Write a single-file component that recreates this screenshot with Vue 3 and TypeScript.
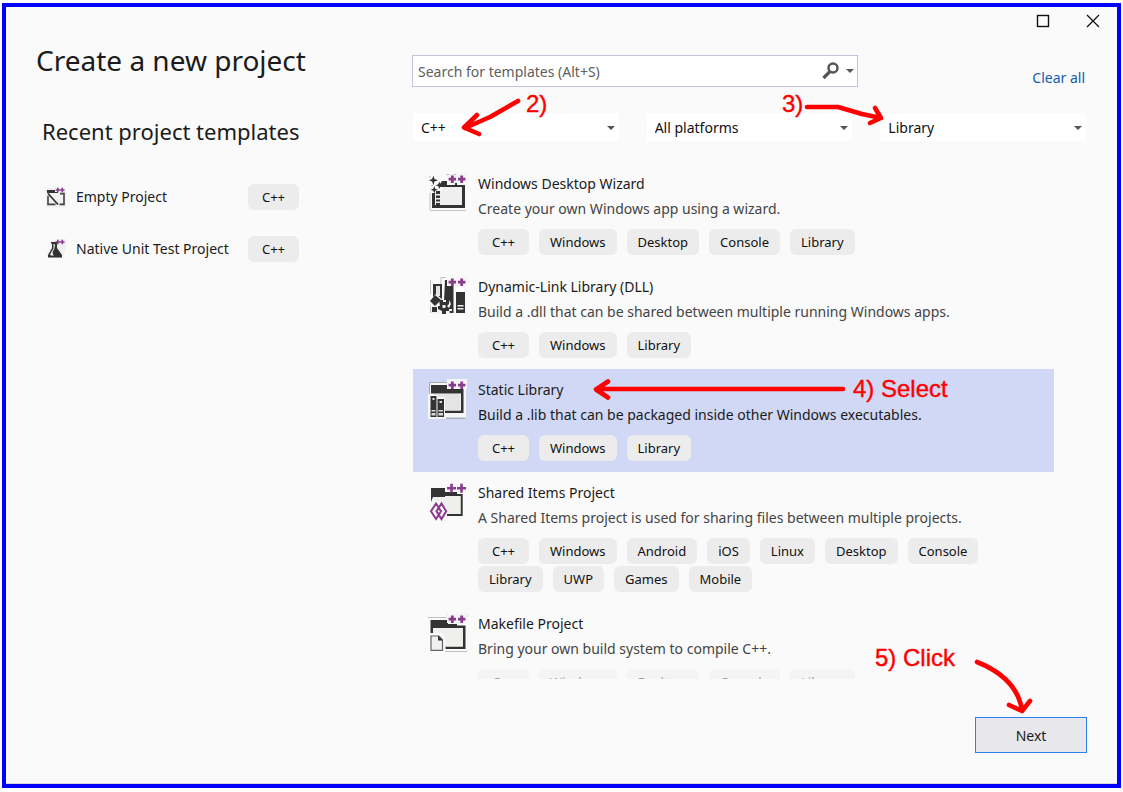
<script setup lang="ts">
import { ref } from 'vue'

type IconName = 'wizard' | 'dll' | 'static' | 'shared' | 'makefile'

interface Template {
  name: string
  description: string
  icon: IconName
  tags: string[]
}

const templates: Template[] = [
  {
    name: 'Windows Desktop Wizard',
    description: 'Create your own Windows app using a wizard.',
    icon: 'wizard',
    tags: ['C++', 'Windows', 'Desktop', 'Console', 'Library'],
  },
  {
    name: 'Dynamic-Link Library (DLL)',
    description: 'Build a .dll that can be shared between multiple running Windows apps.',
    icon: 'dll',
    tags: ['C++', 'Windows', 'Library'],
  },
  {
    name: 'Static Library',
    description: 'Build a .lib that can be packaged inside other Windows executables.',
    icon: 'static',
    tags: ['C++', 'Windows', 'Library'],
  },
  {
    name: 'Shared Items Project',
    description: 'A Shared Items project is used for sharing files between multiple projects.',
    icon: 'shared',
    tags: ['C++', 'Windows', 'Android', 'iOS', 'Linux', 'Desktop', 'Console', 'Library', 'UWP', 'Games', 'Mobile'],
  },
  {
    name: 'Makefile Project',
    description: 'Bring your own build system to compile C++.',
    icon: 'makefile',
    tags: ['C++', 'Windows', 'Desktop', 'Console', 'Library'],
  },
]

const recent = [
  { name: 'Empty Project', icon: 'empty', tag: 'C++' },
  { name: 'Native Unit Test Project', icon: 'flask', tag: 'C++' },
]

const filters = [
  { label: 'Language', options: ['C++', 'C#', 'Python'], value: 'C++' },
  { label: 'Platform', options: ['All platforms', 'Windows', 'Linux'], value: 'All platforms' },
  { label: 'Project type', options: ['Library', 'Console', 'Desktop'], value: 'Library' },
]

const filterValues = ref(filters.map((f) => f.value))
const query = ref('')
const selected = ref('Static Library')

function clearAll() {
  query.value = ''
}
</script>

<template>
  <div class="page">
    <main class="window">
      <div class="caption">
        <button type="button" aria-label="Maximize">
          <svg width="14" height="14" viewBox="0 0 14 14"><rect x="1.5" y="1.5" width="11" height="11" fill="none" stroke="#111" stroke-width="1.4" /></svg>
        </button>
        <button type="button" aria-label="Close">
          <svg width="14" height="14" viewBox="0 0 14 14"><path d="M1 1 13 13M13 1 1 13" fill="none" stroke="#111" stroke-width="1.3" /></svg>
        </button>
      </div>

      <div class="columns">
        <aside class="side">
          <h1>Create a new project</h1>
          <h2>Recent project templates</h2>
          <ul class="recent">
            <li v-for="r in recent" :key="r.name">
              <svg v-if="r.icon === 'empty'" width="20" height="20" viewBox="0 0 20 20">
                <path d="M0 1H9V0H20V20H0Z" fill="#f0f0f0" />
                <path d="M1 6V3H9V5H12V6Z" fill="#333" />
                <path d="M14 6.6H18V17.4H13.5M9.5 17.4H2V9" fill="none" stroke="#444" stroke-width="1.6" />
                <path d="M2 6.5 12 17.5" stroke="#333" stroke-width="1.8" />
                <path d="M11.8 .8v4.4M9.6 3H14M16.3 .8v4.4M14.1 3h4.4" stroke="#8a3a8f" stroke-width="1.6" />
              </svg>
              <svg v-else width="20" height="20" viewBox="0 0 20 20">
                <path d="M4 2H9V0H20V8L17 19H1V15L5 9Z" fill="#f0f0f0" />
                <path d="M5 3H12V4.500H11V9L16 16V18.500H2V16L6 9V4.500H5Z" fill="#333" />
                <path d="M7.500 5V9.500L4.500 14.500Q3.500 16.500 5.500 16.500H8Q6 15 7 12Q9 10 8.800 5Z" fill="#f3f3f3" />
                <path d="M11.800 .8v4.400M9.600 3H14M16.300 .8v4.400M14.100 3h4.400" stroke="#8a3a8f" stroke-width="1.600" />
              </svg>
              <a href="#">{{ r.name }}</a>
              <span class="tag">{{ r.tag }}</span>
            </li>
          </ul>
        </aside>

        <section class="content">
          <div class="search-row">
            <div class="search">
              <input v-model="query" type="search" aria-label="Search for templates" placeholder="Search for templates (Alt+S)" />
              <button type="button" aria-label="Search">
                <svg width="20" height="20" viewBox="0 0 20 20">
                  <circle cx="12" cy="7" r="4.500" fill="none" stroke="#555" stroke-width="2.500" />
                  <path d="M9 10.500 2.500 17" stroke="#555" stroke-width="3.200" />
                </svg>
              </button>
              <button type="button" aria-label="Search options">
                <svg width="8" height="4" viewBox="0 0 8 4"><path d="M0 0H8L4 4Z" fill="#555" /></svg>
              </button>
            </div>
            <button class="clear" type="button" @click="clearAll">Clear all</button>
          </div>

          <div class="filters">
            <div v-for="(f, i) in filters" :key="f.label" class="filter">
              <select v-model="filterValues[i]" :aria-label="f.label">
                <option v-for="o in f.options" :key="o">{{ o }}</option>
              </select>
              <svg class="caret" width="8" height="4" viewBox="0 0 8 4"><path d="M0 0H8L4 4Z" fill="#555" /></svg>
            </div>
          </div>

          <ul class="list">
            <li
              v-for="t in templates"
              :key="t.name"
              :class="{ selected: selected === t.name, faded: t.icon === 'makefile' }"
              @click="selected = t.name"
            >
              <svg class="icon" width="40" height="40" viewBox="0 0 40 40">
                <template v-if="t.icon === 'wizard'">
                  <path d="M2 37V20M2 37.500H38" fill="none" stroke="#c4c4c4" stroke-width="1" />
                  <path d="M20 1H38V10H20Z" fill="#f0f0f0" />
                  <path d="M18.500 1.500H21M26 1.500H29M35 1.500H38V4M2 3V5M3 12.500H5" fill="none" stroke="#bbb" stroke-width="1" />
                  <path d="M4 20V35H37V12H29V10H27V12H19V8H14L12 11V14H34V32H7V20Z" fill="#333" />
                  <path d="M7 18H14V14H34V32H7Z" fill="#efefef" />
                  <path d="M8 18h4v3h-4zM8 22.500h4v2.500h-4zM8 26.500h4v2h-4zM8 30h4v2h-4z" fill="#333" />
                  <path d="M5.300 2.500 6.500 6 10 7.300 6.500 8.500 5.300 12.300 4.200 8.500 .8 7.300 4.200 6ZM11.300 8.500l1 2.800 2.700 1-2.700 1-1 2.700-1-2.700-2.600-1 2.600-1ZM6.300 13l.9 2.800 2.600.9-2.600 1-.9 2.700-1-2.700-2.600-1 2.600-.9Z" fill="#333" />
                </template>
                <template v-else-if="t.icon === 'dll'">
                  <path d="M2.500 4V18M2.500 26V37M13 8V1.500H18" fill="none" stroke="#c0c0c0" stroke-width="1" />
                  <path d="M5 8H14V24H5Z" fill="#333" />
                  <path d="M8 10H12V20H8Z" fill="#e4e4e0" />
                  <path d="M17 4H25.500V37H16V25Z" fill="#333" />
                  <path d="M28 11H37V17H28Z" fill="#fff" />
                  <path d="M28 16H37V37H28Z" fill="#333" />
                  <path d="M29.500 29H35.500V30.500H29.500ZM29.500 32H35.500V33.500H29.500ZM20 33H24V35H20Z" fill="#eee" />
                  <path d="M1 25 8 18 15 24 21 24 23 28 21 32 22 38H3V31Z" fill="#f4f4f4" />
                  <path d="M2 25 7 19 13 24 7 30Z" fill="#333" />
                  <path d="M4 31H9V36H4Z" fill="#333" />
                  <path d="M11 24H15V26H18V24H21V28L19 30 21 32V35H18V38H14V35L10 33V30H12Z" fill="#333" />
                  <path d="M14.500 29H17.500V32H14.500Z" fill="#eee" />
                </template>
                <template v-else-if="t.icon === 'static'">
                  <path d="M1 3H19V0H39V9H38V38H18V40H0V15H1Z" fill="#f6f6f6" />
                  <path d="M1.500 15V3.500H20M18 39.500H37" fill="none" stroke="#aaa" stroke-width="1" />
                  <path d="M3 6H20V10H35.500V34H17V31.500H33V14.500H3Z" fill="#333" />
                  <path d="M6 15H32.500V31.500H17V18H10V16H6Z" fill="#e4e4e4" />
                  <path d="M2.500 17H8.500V38H2.500ZM9.500 20H16V38H9.500Z" fill="#333" />
                  <path d="M4.500 19H6.500V21H4.500ZM11.500 22H14V24H11.500ZM3.500 31H7.500V32.500H3.500ZM3.500 34H7.500V36.500H3.500ZM10.500 31H15V32.500H10.500ZM10.500 34H15V36.500H10.500Z" fill="#ddd" />
                </template>
                <template v-else-if="t.icon === 'shared'">
                  <path d="M3 20V6H17V10H29V12H34.700V34H19V32H32.500V14H17V15H5L3 20Z" fill="#333" />
                  <path d="M5 15H17V14H32.500V32H19L13 19H5Z" fill="#efefee" />
                  <path d="M2.500 29 7.500 20H14L19 29 14 38H7.500Z" fill="#fafafa" />
                  <path d="M3 29.300 8 21.500 13 29.300 8 37ZM8.500 29.300 13.500 21.500 18.200 29.300 13.500 37Z" fill="none" stroke="#8a3a8f" stroke-width="2" />
                </template>
                <template v-else>
                  <path d="M0 4.500H19M17 38.500H39.500M19.500 4V1.500M36 1.500H39V4" fill="none" stroke="#c0c0c0" stroke-width="1" />
                  <path d="M2.500 20V7H20V11H29V12.500H37.500V36H17.500V33.500H35V15H5V20Z" fill="#333" />
                  <path d="M5 15H35V33.500H17.500V25L14 20H5Z" fill="#efefee" />
                  <path d="M3 23H11L14.500 27V37.300H3Z" fill="#f0f0f0" stroke="#666" stroke-width="1.200" />
                  <path d="M10 22.500 15 27.500H10Z" fill="#333" />
                </template>
                <path v-if="t.icon !== 'shared'" d="M19 2H28V0H39V10H19Z" fill="#f6f6f6" />
                <path
                  v-if="t.icon === 'shared'"
                  d="M23.500 1.800v9M19 6.300h9M33.500 1.800v9M29 6.300h9"
                  stroke="#8a3a8f"
                  stroke-width="2.600"
                />
                <path v-else d="M24.300 2.500v7.400M20.600 6.200H28M33.700 2.500v7.400M30 6.200h7.400" stroke="#8a3a8f" stroke-width="2.800" />
              </svg>
              <div class="info">
                <h3>{{ t.name }}</h3>
                <p>{{ t.description }}</p>
                <div class="tags">
                  <span v-for="tag in t.tags" :key="tag" class="tag">{{ tag }}</span>
                </div>
              </div>
            </li>
          </ul>
        </section>
      </div>

      <footer><button type="button" class="next">Next</button></footer>
    </main>

    <svg class="notes" width="1123" height="792" viewBox="0 0 1123 792">
      <g fill="none" stroke="#f00" stroke-width="4.600" stroke-linecap="round" stroke-linejoin="round">
        <path d="M518 101 490 117 465 128M477 115 464 127.500 479 134" />
        <path d="M807 107H838L862 114 881 118M875 108 881 118 870 123" />
        <path d="M843 389H597M608 381.500 596 389.500 608 397.500" />
        <path d="M977 662Q1017 678 1022 710M1009 705 1022 711 1030 701" />
      </g>
      <g class="note-text">
        <text x="526" y="112">2)</text>
        <text x="782" y="112">3)</text>
        <text x="853" y="397">4) Select</text>
        <text x="875" y="666">5) Click</text>
      </g>
    </svg>
  </div>
</template>

<style>
body {
  margin: 0;
  background: #fff;
}
</style>

<style scoped>
* {
  box-sizing: border-box;
}
.page {
  position: relative;
  height: 100vh;
  padding: 3px 2px 4px;
  font-family: "Noto Sans", "Open Sans", sans-serif;
  font-size: 14px;
  line-height: 20px;
  color: #1b1b1b;
}
.window {
  display: flex;
  flex-direction: column;
  height: 100%;
  border: 4px solid #00f;
  background: #fafafa;
}
button,
input,
select {
  font: inherit;
  color: inherit;
  border: 0;
  border-radius: 0;
  background: none;
  padding: 0;
  margin: 0;
  outline: none;
}
h1,
h2,
h3,
p,
ul {
  margin: 0;
  padding: 0;
  font-weight: 400;
  list-style: none;
}
svg {
  display: block;
  flex: none;
}
.caption {
  display: flex;
  justify-content: flex-end;
  gap: 36px;
  height: 28px;
  padding: 7px 17px 0 0;
}
.caption button {
  height: 14px;
}
.columns {
  display: flex;
  flex: 1;
  min-height: 0;
}
.side {
  flex: none;
  width: 406px;
  padding-left: 30px;
}
h1 {
  margin-top: 5px;
  font-size: 28px;
  line-height: 40px;
}
h2 {
  margin: 35px 0 0 6px;
  font-size: 22px;
  line-height: 32px;
}
.recent {
  margin: 37px 0 0 10px;
  width: 253px;
}
.recent li {
  display: flex;
  align-items: center;
  height: 26px;
  margin-bottom: 26px;
}
.recent a {
  flex: 1;
  margin-left: 10px;
  color: inherit;
  line-height: 22px;
  text-decoration: none;
}
.tag {
  min-width: 51px;
  height: 26px;
  padding: 0 11px;
  border-radius: 6px;
  background: #ececec;
  font-size: 13px;
  line-height: 27px;
  text-align: center;
  color: #111;
}
.tags .tag:not(:first-child) {
  min-width: 0;
}
.content {
  display: flex;
  flex: 1;
  flex-direction: column;
  min-width: 0;
  padding: 20px 31px 0 0;
}
.search-row {
  display: flex;
  justify-content: space-between;
  align-items: flex-start;
}
.search {
  display: flex;
  align-items: center;
  width: 446px;
  height: 32px;
  padding: 0 3px 0 5px;
  border: 1px solid #c3c3d9;
  background: #fff;
}
.search input {
  flex: 1;
  min-width: 0;
  height: 30px;
}
.search input::placeholder {
  color: #606060;
  opacity: 1;
}
.search button + button {
  margin-left: 5px;
}
.clear {
  margin: 13px 1px 0 0;
  color: #0e5cb5;
}
.filters {
  display: grid;
  grid-template-columns: repeat(3, 1fr);
  gap: 28px;
  margin: 25px 0 0 1px;
}
.filter {
  position: relative;
}
.filter select {
  width: 100%;
  height: 28px;
  padding: 2px 24px 0 8px;
  appearance: none;
  background: #fff;
  color: #111;
}
.caret {
  position: absolute;
  right: 4px;
  top: 13px;
  pointer-events: none;
}
.list {
  flex: 1;
  min-height: 0;
  margin: 22px 32px 0 1px;
  overflow: hidden;
}
.list li {
  display: flex;
  padding: 10px 15px 11px;
}
.list .selected {
  background: #d1d8f5;
}
.info {
  margin-left: 10px;
}
h3 {
  font-size: 14px;
  line-height: 22px;
}
p {
  margin: 3px 0 9px;
  line-height: 22px;
  color: #444;
}
.selected p {
  color: #1b1b1b;
}
.tags {
  display: flex;
  flex-wrap: wrap;
  gap: 2px 10px;
}
.faded .tags {
  opacity: 0.4;
}
footer {
  display: flex;
  justify-content: flex-end;
  padding: 38px 30px 30px;
  border-bottom: 1px solid #d8d8d8;
}
.next {
  width: 112px;
  height: 36px;
  padding-top: 2px;
  border: 1px solid #2d7ff0;
  background: #e7e7ec;
}
.notes {
  position: absolute;
  left: 0;
  top: 0;
  pointer-events: none;
}
.note-text {
  font-family: "Liberation Sans", Arial, sans-serif;
  font-size: 24px;
  fill: #f00;
  stroke: #f00;
  stroke-width: 0.4px;
}
</style>
